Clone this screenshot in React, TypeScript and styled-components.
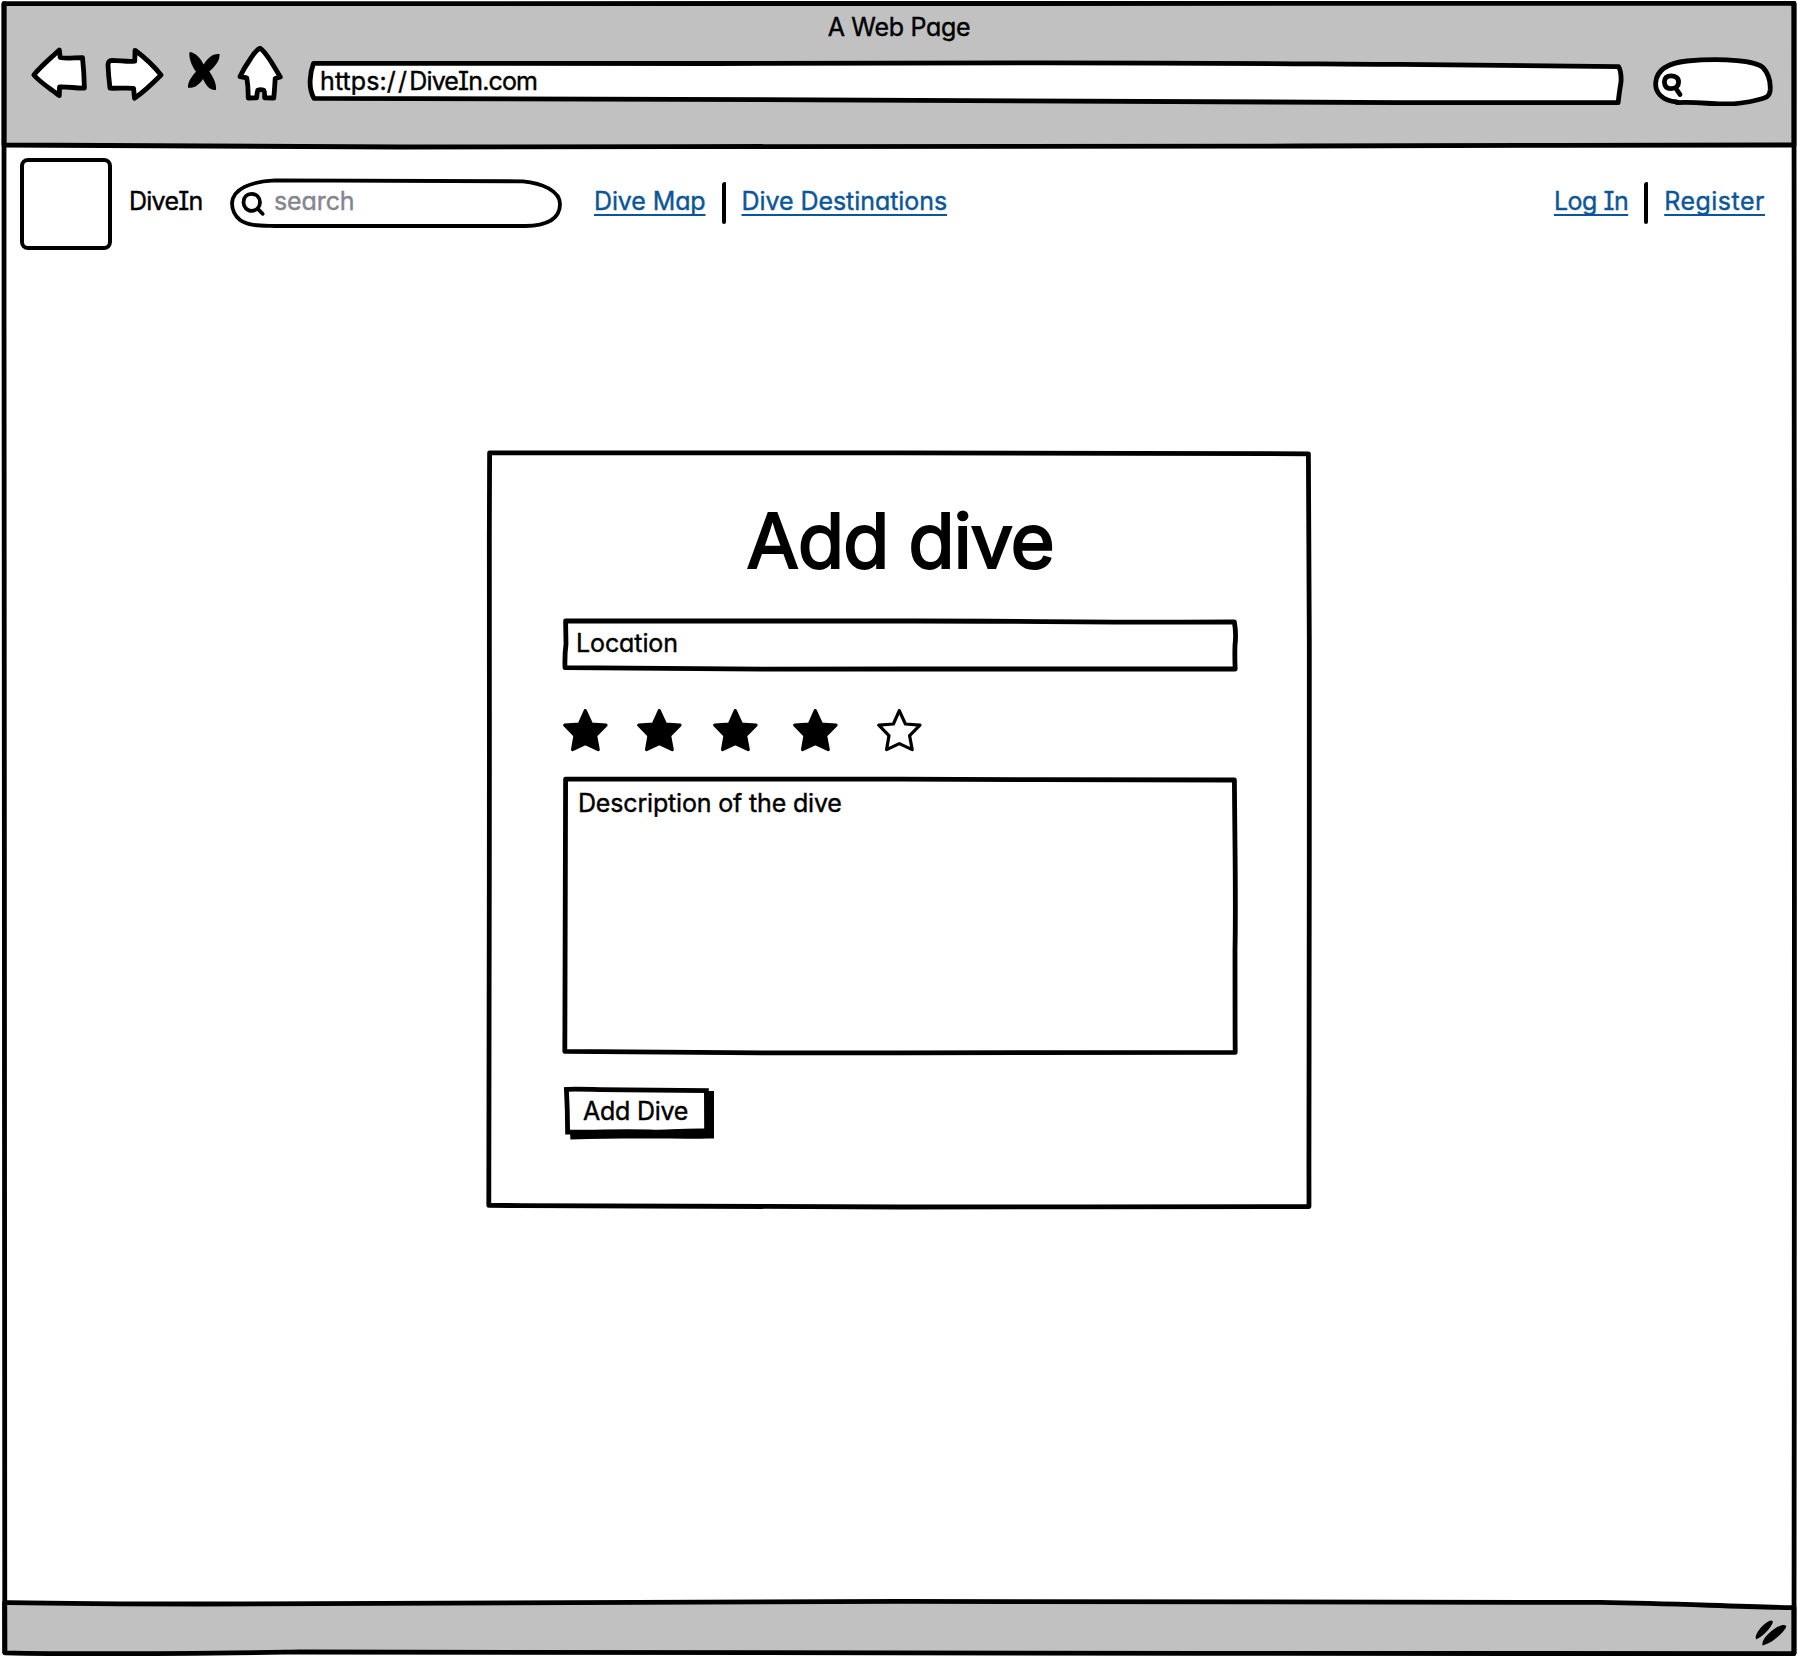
import React from "react";
import styled, { createGlobalStyle } from "styled-components";

const INK = "#000";
const CHROME = "#c1c1c1";
const LINK = "#0b5699";
const MUTED = "#868490";

const GlobalStyle = createGlobalStyle`
  * { box-sizing: border-box; }
  body {
    margin: 0;
    background: #fff;
    color: ${INK};
    font-family: Inter, Lato, sans-serif;
    font-size: 25px;
    line-height: 32px;
    font-variant-ligatures: none;
    font-feature-settings: "cv11", "cv08", "calt" 0;
    -webkit-text-stroke: 0.4px;
  }
`;

const Window = styled.div`
  position: relative;
  display: flex;
  flex-direction: column;
  width: 1798px;
  height: 1658px;
  overflow: hidden;
`;

const Sketch = styled.svg<{ $pen?: number }>`
  position: absolute;
  inset: 0;
  width: 100%;
  height: 100%;
  overflow: visible;
  pointer-events: none;
  fill: none;
  stroke: ${INK};
  stroke-width: ${(p) => p.$pen ?? 4.8};
  stroke-linejoin: round;
  stroke-linecap: round;
`;

const Icon = styled.svg<{ $w: number; $h?: number; $ml?: number }>`
  position: relative;
  flex: none;
  display: block;
  width: ${(p) => p.$w}px;
  height: ${(p) => p.$h ?? 60}px;
  margin-left: ${(p) => p.$ml ?? 0}px;
  fill: #fff;
  stroke: ${INK};
  stroke-width: 4.8;
  stroke-linejoin: round;
  stroke-linecap: round;
`;

const Label = styled.span<{ $track?: number }>`
  position: relative;
  white-space: pre;
  letter-spacing: ${(p) => p.$track ?? 0}px;
`;

const Header = styled.header`
  position: relative;
  height: 146px;
  padding-top: 11px;
`;

const WindowTitle = styled.div`
  position: relative;
  height: 35px;
  text-align: center;
`;

const Toolbar = styled.div`
  position: relative;
  display: flex;
  height: 60px;
  padding: 0 25px 0 30px;
`;

const AddressBar = styled.div`
  position: relative;
  flex: 1;
  margin: 0 29px 0 23px;
  padding: 19px 0 0 13px;
`;

const Page = styled.main`
  flex: 1;
  padding: 12px 33px 0 20px;
`;

const Nav = styled.nav`
  display: flex;
  align-items: center;
  height: 92px;
`;

const Logo = styled.div`
  width: 92px;
  height: 92px;
  border: 4px solid ${INK};
  border-radius: 8px;
`;

const Brand = styled.div`
  width: 101px;
  margin-left: 17px;
  padding-bottom: 7px;
`;

const SearchBox = styled.div`
  position: relative;
  display: flex;
  width: 332px;
  height: 50px;
  margin-bottom: 3px;
  padding: 7px 0 0 44px;
  color: ${MUTED};
`;

const LinkGroup = styled.div<{ $end?: boolean }>`
  display: flex;
  align-items: center;
  gap: 16px;
  margin-left: ${(p) => (p.$end ? "auto" : "32px")};
  padding-bottom: 3px;
`;

const NavLink = styled.a<{ $track: number }>`
  padding-bottom: 4px;
  color: ${LINK};
  white-space: pre;
  letter-spacing: ${(p) => p.$track}px;
  text-decoration: underline;
  text-decoration-thickness: 2px;
  text-underline-offset: 4px;
  text-decoration-skip-ink: none;
`;

const Divider = styled.i`
  width: 4px;
  height: 42px;
  border-radius: 3px 1px 2px 2px;
  background: ${INK};
`;

const Card = styled.section`
  position: relative;
  width: 820px;
  height: 753px;
  margin: 203px 0 0 469px;
  padding: 41px 74px 0 76px;
`;

const Heading = styled.h1`
  position: relative;
  margin: 0 0 35px;
  font-size: 76px;
  font-weight: 400;
  line-height: 92px;
  letter-spacing: -1.3px;
  text-align: center;
  -webkit-text-stroke: 2px;
`;

const Field = styled.div<{ $h: number; $pad: string }>`
  position: relative;
  height: ${(p) => p.$h}px;
  padding: ${(p) => p.$pad};
`;

const Rating = styled.div`
  display: flex;
  height: 43px;
  margin: 40px 0 27px -2px;
`;

const Button = styled.button`
  position: relative;
  display: flex;
  align-items: flex-start;
  width: 149px;
  height: 50px;
  margin: 37px 0 0;
  padding: 6px 0 0 18px;
  border: 0;
  background: none;
  color: inherit;
  font: inherit;
  font-feature-settings: inherit;
`;

const Footer = styled.footer`
  position: relative;
  display: flex;
  justify-content: flex-end;
  height: 55px;
  padding: 16px 10px 0 0;
`;

const STAR =
  "M22.3 1.6 L28.4 15 L43 16.2 L32.6 26.6 L35.2 40.6 L22.3 34.6 L9.6 40.6 L12 26.6 L1.8 16.2 L16.4 15 Z";

function Star({ filled, gap }: { filled: boolean; gap: number }) {
  return (
    <Icon $w={45} $h={43} $ml={gap} viewBox="0 0 45 43">
      <path d={STAR} strokeWidth={3.2} fill={filled ? INK : "#fff"} />
    </Icon>
  );
}

const RATING = [
  { filled: true, gap: 0 },
  { filled: true, gap: 29 },
  { filled: true, gap: 31 },
  { filled: true, gap: 35 },
  { filled: false, gap: 39 },
];

export default function App() {
  return (
    <>
      <GlobalStyle />
      <Window>
        <Header>
          <Sketch viewBox="0 0 1798 146">
            <path
              fill={CHROME}
              d="M4 3.6 L1794 3.4 L1794 145 C1600 145 1500 145.6 1300 146 C900 145.4 700 147 400 147 C200 146.8 100 145.2 4 145 Z"
            />
          </Sketch>
          <WindowTitle>
            <Label $track={-0.3}>A Web Page</Label>
          </WindowTitle>
          <Toolbar>
            <Icon $w={58} viewBox="30 46 58 60">
              <path d="M33.8 75 C42 65 51 58 59.3 50 L60.2 57.5 C67 59.3 75 57.4 82.5 57.6 C83.6 68 84.2 78 84.4 88 C76 88.3 68 86.6 59.5 87 L59.3 95.7 C51 89 42 84 33.8 75 Z" />
            </Icon>
            <Icon $w={60} $ml={16} viewBox="104 46 60 60">
              <path d="M108 65 Q108 60.5 112 60.3 C120 60.3 127 62 134.8 61.2 L135 50.3 C144 57 153 65 161 75 C152 84 144 92 134.5 98.2 L133.6 88.3 C126 87.6 118 88.5 110 88.2 Q108.5 76 108 65 Z" />
            </Icon>
            <Icon $w={36} $ml={20} viewBox="184 46 36 60">
              <path
                stroke="none"
                fill={INK}
                d="M189.6 52 C196 52.6 201 59 203.6 64.5 C207.5 58.5 212 53.4 219.5 54 C220.2 61 214.5 66.5 209.4 71.5 C213 77 216.6 83 216 90 C209 90.4 205.6 84.5 203 79 C199.5 84.5 195 88.2 188 87.8 C187.6 82 192 76 196 71.8 C192.5 67 188.4 59 189.6 52 Z"
              />
            </Icon>
            <Icon $w={48} $ml={16} viewBox="236 46 48 60">
              <path d="M260 48.2 Q263 49.5 270 60 Q275 68 280.3 77 L275.2 78.5 Q274.6 89 273.8 98 L264.6 97.8 Q264.8 92 263.8 90.2 Q260.5 89.2 257.8 90.2 Q257 93 256.6 97.8 L248.2 98 Q248.4 87 246.8 77.8 L240 76.6 Q244 68 251 58 Q256 50 260 48.2 Z" />
            </Icon>
            <AddressBar>
              <Sketch viewBox="307 46 1317 60">
                <path
                  fill="#fff"
                  d="M313.5 63.4 C600 62.6 700 64.2 900 63.2 C1150 62 1300 64 1400 64.4 L1618.6 66.6 Q1621.6 72 1621 82 Q1619 94 1618.2 102.6 L1400 102.6 C1100 102.6 900 101 760 99.6 C600 97.8 450 98.4 314 98.4 Q309.5 90 310.2 80 Q310.6 71 313.5 63.4 Z"
                />
              </Sketch>
              <Label $track={0.1}>https:</Label>
              <Label $track={2.2}>//</Label>
              <Label $track={-0.85}>DiveIn.com</Label>
            </AddressBar>
            <Icon $w={120} viewBox="1653 46 120 60">
              <path d="M1677 102 C1662 101 1654.6 92 1655.8 82 C1657 70 1668 63 1687 61 C1705 59.3 1722 59.2 1737 60.6 C1749 61.6 1758 63.2 1763 67.5 C1769 74 1770.6 83 1770.2 90 C1769.6 96.5 1766 98.2 1759 99.5 C1747 103 1735 104.2 1722 104 C1708 103.8 1697 101.6 1677 102.6 Z" />
              <path
                fill="none"
                d="M1664.4 82 C1664.3 78 1667 75.8 1671 75.8 C1675.5 75.8 1678.6 78 1678.6 82 C1678.6 86 1676 88.6 1671 88.6 C1666.5 88.6 1664.5 86 1664.4 82 Z M1675.5 88 L1680 94.5"
              />
            </Icon>
          </Toolbar>
        </Header>

        <Page>
          <Nav>
            <Logo />
            <Brand>
              <Label $track={-0.75}>DiveIn</Label>
            </Brand>
            <SearchBox>
              <Sketch $pen={3.8} viewBox="230 178 332 50">
                <path d="M275 180.3 C350 180 430 181.4 523 181.3 C542 183 560 191 560 204 C560 218 548 225.6 525 226 L275 226 C262 225.6 249 226.4 240 220 C234 215 232 209 232 203 C233 189 250 181.6 275 180.3 Z" />
                <path d="M243.5 202.3 C243.5 197 247 193.8 251.5 193.8 C256.5 193.8 260 197.5 260 202.3 C260 207 256.5 210.8 251.8 210.8 C247 210.8 243.5 207 243.5 202.3 Z M257.5 208.5 L262.6 213.8" />
              </Sketch>
              <Label $track={-0.1}>search</Label>
            </SearchBox>
            <LinkGroup>
              <NavLink $track={-0.12}>Dive Map</NavLink>
              <Divider />
              <NavLink $track={-0.06}>Dive Destinations</NavLink>
            </LinkGroup>
            <LinkGroup $end>
              <NavLink $track={-0.5}>Log In</NavLink>
              <Divider />
              <NavLink $track={0.5}>Register</NavLink>
            </LinkGroup>
          </Nav>

          <Card>
            <Sketch viewBox="489 453 820 753">
              <path d="M489.6 452.8 C700 452 800 452 900 452.8 C1080 452.4 1150 454 1308.4 453.8 C1309 600 1310 700 1309.3 850 C1308.6 1000 1308.8 1100 1309 1206.5 C1150 1207 1050 1206.6 900 1207 C700 1207.4 600 1205.8 488.8 1205.4 C488.6 1000 489.6 900 489.4 750 C489.6 600 489 550 489.6 452.8 Z" />
            </Sketch>
            <Heading>Add dive</Heading>
            <Field $h={48} $pad="6px 0 0 11px">
              <Sketch viewBox="565 621 670 48">
                <path d="M565.6 621 C700 620 800 620.4 900 621 C1030 620.8 1080 622.6 1234.4 622 Q1236.4 634 1235 645 Q1234.6 658 1235.2 669 C1100 668.6 1000 669.8 900 669 C780 669.4 700 669.2 565 667.6 Q564.6 655 566 644 Q565.8 632 565.6 621 Z" />
              </Sketch>
              <Label $track={-0.1}>Location</Label>
            </Field>
            <Rating>
              {RATING.map((s, i) => (
                <Star key={i} {...s} />
              ))}
            </Rating>
            <Field $h={273} $pad="8px 0 0 13px">
              <Sketch viewBox="565 779 670 273">
                <path d="M565.6 779.2 C700 778.4 800 778.6 900 779.2 C1030 779 1080 780.6 1234.4 780 C1235 860 1236 900 1235 950 C1234.8 990 1235 1020 1235.2 1052.4 C1100 1052.6 1000 1053.2 900 1052.8 C780 1053 700 1052.8 564.8 1051.4 C565 980 566 920 565.6 779.2 Z" />
              </Sketch>
              <Label $track={-0.17}>Description of the dive</Label>
            </Field>
            <Button type="button">
              <Sketch viewBox="565 1089 149 50">
                <path
                  stroke="none"
                  fill={INK}
                  d="M706 1091 L714 1091 L714 1138.6 C670 1138.8 620 1137.8 570.4 1139.4 L570 1130 Z"
                />
                <path
                  fill="#fff"
                  strokeLinejoin="miter"
                  d="M566.4 1089.4 Q572 1088.8 600 1089.6 L706.4 1090.6 L706.6 1131 C680 1130.6 665 1132.4 650 1132 C620 1131 600 1132.4 567.6 1132.2 Q567.6 1110 566.4 1089.4 Z"
                />
              </Sketch>
              <Label $track={-0.25}>Add Dive</Label>
            </Button>
          </Card>
        </Page>

        <Footer>
          <Sketch viewBox="0 1603 1798 55">
            <path
              fill={CHROME}
              d="M4.6 1602.6 C50 1603.4 80 1604 200 1604 C500 1603.4 700 1601.6 900 1601.4 C1200 1601 1400 1602 1600 1602.4 C1680 1603.6 1730 1606.6 1794 1607.6 L1794 1653.6 C1600 1654.6 1400 1654.4 1200 1653.4 C800 1654 500 1651 300 1652 C200 1653.4 100 1655 4.8 1652.8 Z"
            />
          </Sketch>
          <Icon $w={34} $h={28} viewBox="1754 1619 34 28">
            <path
              stroke="none"
              fill={INK}
              d="M1756 1639.4 C1754 1634 1765 1621.5 1771 1620.6 C1774 1620.8 1772.6 1623 1771.6 1625 C1768 1631 1762 1637 1756 1639.4 Z M1762.6 1645.4 C1760 1639 1777 1624.6 1784 1625 C1787 1625.4 1786.6 1627 1785 1629 C1780 1636 1771 1643.6 1762.6 1645.4 Z"
            />
          </Icon>
        </Footer>
        <Sketch viewBox="0 0 1798 1658">
          <path d="M4 3.6 C4.4 300 3.4 700 4.4 900 C4.8 1200 4.2 1500 4.8 1652.6 M1794 3.4 C1794.6 200 1794 600 1794.4 900 C1793.8 1200 1794.6 1400 1794 1653.4" />
        </Sketch>
      </Window>
    </>
  );
}
